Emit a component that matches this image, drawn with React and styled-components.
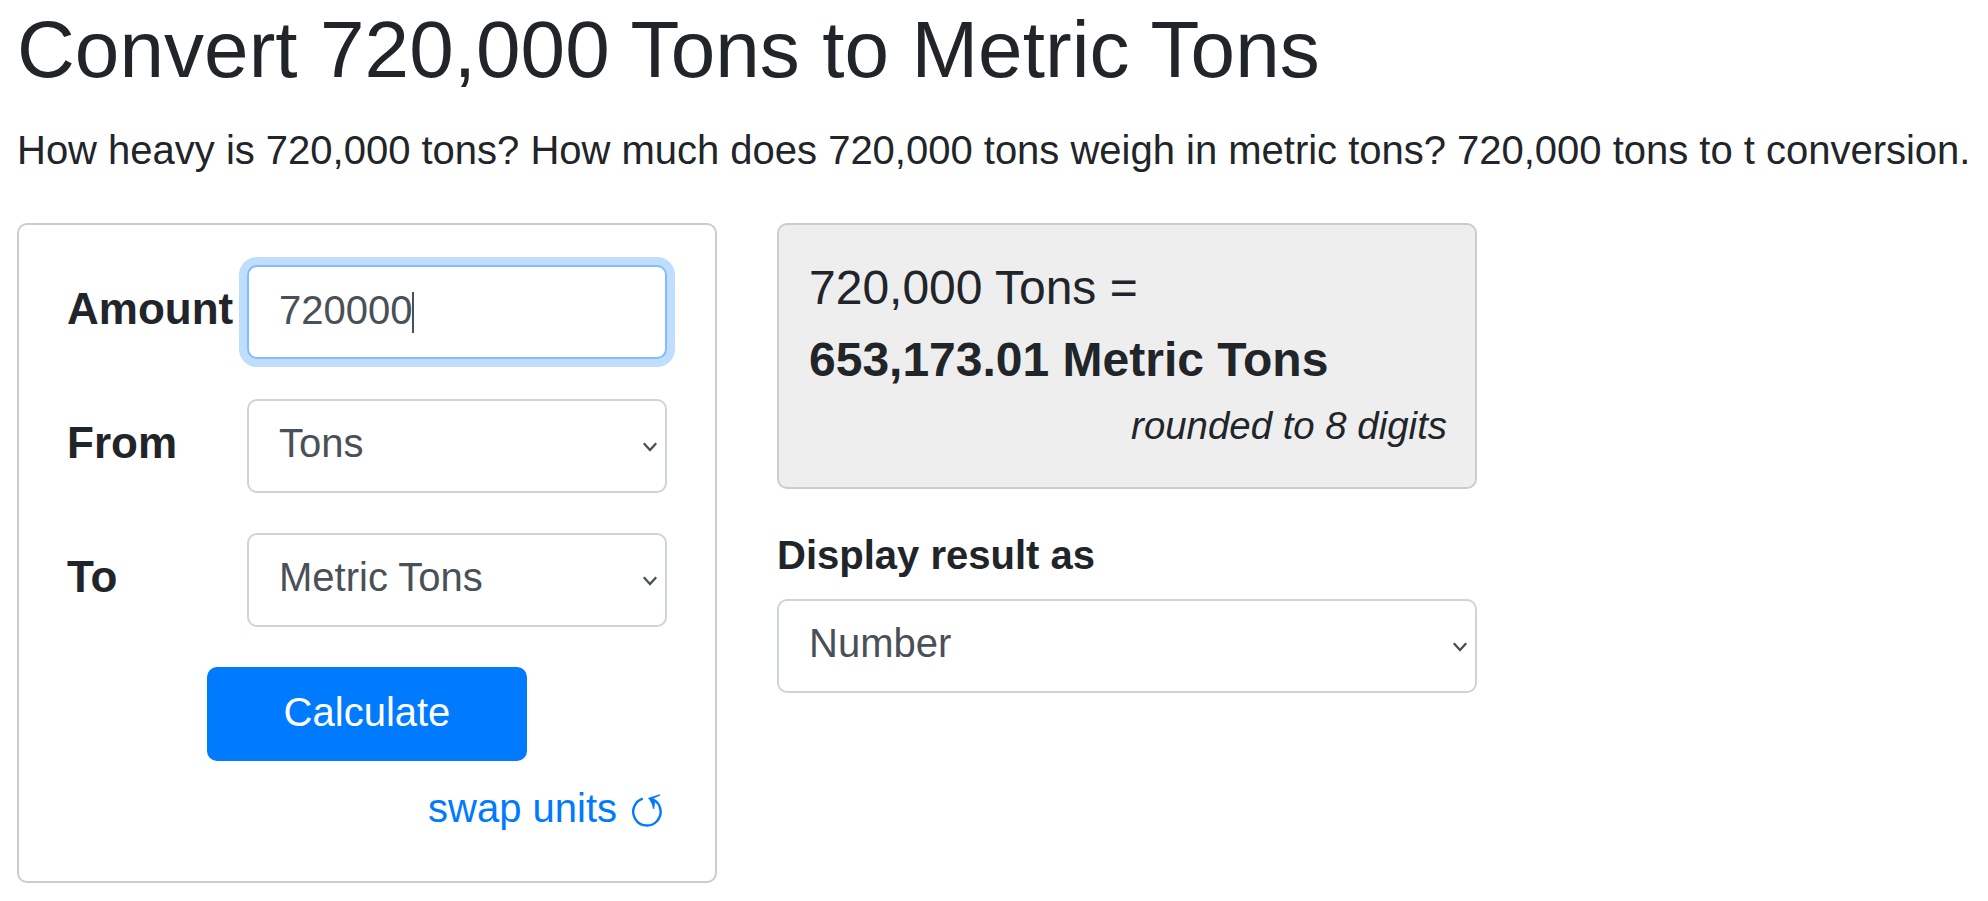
import React, {useState} from 'react';
import styled, {createGlobalStyle} from 'styled-components';


const GlobalStyle = createGlobalStyle`
    * {
        box-sizing: border-box;
    }
    body {
        margin: 0;
        background: #ffffff;
        color: #212529;
        font-family: "Liberation Sans", Arial, sans-serif;
        font-size: 40px;
        line-height: 1.5;
    }
`
const Page = styled.div`
    padding: 2px 0 0 17px;
`
const Title = styled.h1`
    margin: 0 0 22px;
    font-size: 80px;
    font-weight: 400;
    letter-spacing: 0.08px;
    line-height: 96px;
`
const Intro = styled.p`
    margin: 0 0 43px;
    letter-spacing: -0.01px;
    line-height: 60px;
    white-space: nowrap;
`
const Columns = styled.div`
    display: flex;
    align-items: flex-start;
    gap: 60px;
`
const Card = styled.div`
    width: 700px;
    border: 2px solid #cccccc;
    border-radius: 10px;
`
const Form = styled(Card)`
    display: flex;
    flex-direction: column;
    gap: 40px;
    height: 660px;
    padding: 40px 48px;
`
const Row = styled.div`
    display: flex;
    align-items: center;
    height: 94px;
`
const Label = styled.label`
    width: 180px;
    padding-bottom: 6px;
    font-size: 44px;
    font-weight: 700;
    line-height: 66px;
    white-space: nowrap;
`
const Control = styled.div`
    position: relative;
    width: ${props => props.$wide ? '700px' : '420px'};
    height: 94px;
    > input, > select {
        display: block;
        width: 100%;
        height: 100%;
        margin: 0;
        padding: 0 30px 6px;
        border: 2px solid #ced4da;
        border-radius: 10px;
        outline: none;
        appearance: none;
        background: #ffffff;
        color: #495057;
        font: inherit;
    }
    > input {
        padding-bottom: 4px;
        border-color: #80bdff;
        box-shadow: 0 0 0 8px #bfdeff;
        caret-color: transparent;
    }
    > svg {
        position: absolute;
        right: 9px;
        top: 42px;
        pointer-events: none;
    }
`
const Caret = styled.span`
    position: absolute;
    left: 165px;
    top: 27px;
    width: 2px;
    height: 41px;
    background: #495057;
`
const Button = styled.button`
    align-self: center;
    width: 320px;
    height: 94px;
    padding: 0 0 5px;
    border: none;
    border-radius: 10px;
    background: #007bff;
    color: #ffffff;
    font: inherit;
`
const SwapLink = styled.a`
    display: flex;
    align-items: center;
    align-self: flex-end;
    gap: 15px;
    height: 60px;
    margin: -23px 5px 0 0;
    color: #007bff;
    cursor: pointer;
    > svg {
        margin-top: 6px;
    }
`
const Side = styled.div`
    width: 700px;
`
const Result = styled(Card)`
    height: 266px;
    padding: 27px 28px 0 30px;
    background: #eeeeee;
    font-size: 48px;
    line-height: 72px;
`
const Rounded = styled.div`
    font-size: 38.4px;
    font-style: italic;
    line-height: 60px;
    text-align: right;
`
const DisplayLabel = styled.label`
    display: block;
    margin: 36px 0 14px;
    font-weight: 700;
    line-height: 60px;
`

const Chevron = () => (
    <svg width="16" height="12" viewBox="0 0 16 12" fill="none">
        <path d="M1.8 2.2 L8 9 L14.2 2.2" stroke="#495057" strokeWidth="2.3"/>
    </svg>
)

const SwapIcon = () => (
    <svg width="30" height="34" viewBox="0 0 30 34">
        <path d="M10.8 4.7 A13.7 13.7 0 1 0 21.6 5.8" fill="none" stroke="#007bff" strokeWidth="2.4"/>
        <path d="M16 4 L28 0.2 L28.2 1.4 L21.5 4.6 L23.2 7 L22.2 15 L21 14.7 Q20 8.5 16 4 Z" fill="#007bff"/>
    </svg>
)

const UnitSelect = ({id, value, onChange, options, wide}) => (
    <Control $wide={wide}>
        <select id={id} value={value} onChange={e => onChange(e.target.value)}>
            {options.map(el => <option key={el}>{el}</option>)}
        </select>
        <Chevron/>
    </Control>
)

const units = ['Tons', 'Metric Tons']

const App = () => {
    const [amount, setAmount] = useState('720000')
    const [from, setFrom] = useState('Tons')
    const [to, setTo] = useState('Metric Tons')
    const [display, setDisplay] = useState('Number')

    const swap = () => {
        setFrom(to)
        setTo(from)
    }

    return (
        <Page>
            <GlobalStyle/>
            <Title>Convert 720,000 Tons to Metric Tons</Title>
            <Intro>How heavy is 720,000 tons? How much does 720,000 tons weigh in metric tons? 720,000 tons to t conversion.</Intro>
            <Columns>
                <Form>
                    <Row>
                        <Label htmlFor="amount">Amount</Label>
                        <Control>
                            <input id="amount" value={amount} onChange={e => setAmount(e.target.value)}/>
                            <Caret/>
                        </Control>
                    </Row>
                    <Row>
                        <Label htmlFor="from">From</Label>
                        <UnitSelect id="from" value={from} onChange={setFrom} options={units}/>
                    </Row>
                    <Row>
                        <Label htmlFor="to">To</Label>
                        <UnitSelect id="to" value={to} onChange={setTo} options={units}/>
                    </Row>
                    <Button>Calculate</Button>
                    <SwapLink onClick={swap}>swap units <SwapIcon/></SwapLink>
                </Form>
                <Side>
                    <Result>
                        <div>720,000 Tons =</div>
                        <strong>653,173.01 Metric Tons</strong>
                        <Rounded>rounded to 8 digits</Rounded>
                    </Result>
                    <DisplayLabel htmlFor="display">Display result as</DisplayLabel>
                    <UnitSelect id="display" value={display} onChange={setDisplay} options={['Number']} wide/>
                </Side>
            </Columns>
        </Page>
    )
}
export default App;
